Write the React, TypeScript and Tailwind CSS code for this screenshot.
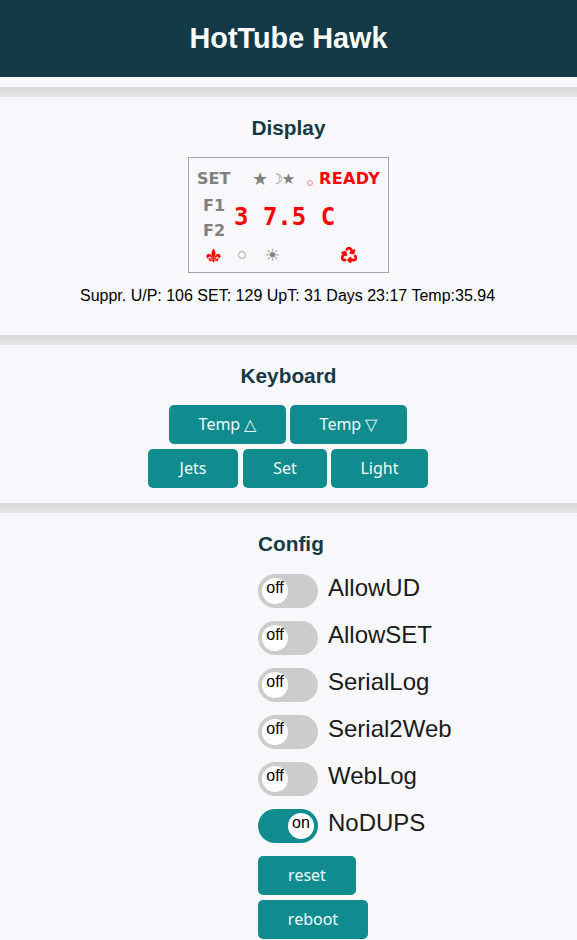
import { FaRecycle } from 'react-icons/fa';
import { GiFleurDeLys } from 'react-icons/gi';

const buttonClass =
  "flex h-[39px] items-center justify-center rounded-[5px] bg-[#108b8e] pb-0.5 text-[16px] text-[#f0fbfb] font-['Noto_Sans',sans-serif]";

const toggles = [
  { label: 'AllowUD', on: false },
  { label: 'AllowSET', on: false },
  { label: 'SerialLog', on: false },
  { label: 'Serial2Web', on: false },
  { label: 'WebLog', on: false },
  { label: 'NoDUPS', on: true },
];

function Divider() {
  return <div className="h-2.5 bg-gradient-to-b from-[#d8d8d8] to-[#e4e4e4]" />;
}

function Toggle({ label, on }: { label: string; on: boolean }) {
  return (
    <div className="flex h-[34px] items-start gap-2.5">
      <div className={`flex h-[34px] w-[60px] items-center rounded-full px-1 ${on ? 'justify-end bg-[#108b8e]' : 'bg-[#cccccc]'}`}>
        <div className="flex h-[26px] w-[26px] justify-center rounded-full bg-white text-[16px] leading-[20px] text-black">
          {on ? 'on' : 'off'}
        </div>
      </div>
      <span className="text-[24px] leading-7 text-[#1a1a1a]">{label}</span>
    </div>
  );
}

function Lcd() {
  return (
    <div className="mx-auto flex h-[116px] w-[201px] flex-col border border-[#a3a3a3] pl-2 pt-[9px] text-left font-['DejaVu_Sans',sans-serif] text-[#808080]">
      <div className="flex h-6 items-center">
        <span className="w-[55px] text-[16px] font-bold leading-6">SET</span>
        <span className="flex w-[55px] items-center whitespace-pre leading-6">
          <span className="text-[18px]">★</span>
          <span className="ml-[2px] text-[14px]">☽</span>
          <span className="ml-[-1px] text-[15px]">★</span>
        </span>
        <span className="mt-2 h-[6px] w-[6px] rounded-full border border-[#f58a8a]" />
        <span className="ml-[6px] text-[16px] font-bold leading-6 tracking-[0.4px] text-[#ff0000]">READY</span>
      </div>
      <div className="flex h-[52px] items-center">
        <div className="ml-[6px] mt-0.5 flex w-[31px] flex-col text-[16px] font-bold leading-[25px]">
          <span>F1</span>
          <span>F2</span>
        </div>
        <span className="whitespace-pre font-['DejaVu_Sans_Mono',monospace] text-[24px] font-bold leading-7 text-[#ff0000]">
          3 7.5 C
        </span>
      </div>
      <div className="flex h-[24px] items-center">
        <GiFleurDeLys className="ml-[9px] h-[15px] w-[15px] stroke-[#ff0000] stroke-[12px] text-[#ff0000]" />
        <span className="ml-[17px] h-[8px] w-[8px] rounded-full border border-[#a8a8a8]" />
        <span className="ml-[19px] w-[76px] text-[17px] leading-6">☀</span>
        <FaRecycle className="h-[16px] w-[16px] stroke-[#ff0000] stroke-[28px] text-[#ff0000]" />
      </div>
    </div>
  );
}

export default function App() {
  return (
    <div className="h-[940px] overflow-hidden bg-[#f8f8fb] font-['Liberation_Sans',Arial,sans-serif]">
      <header className="flex h-[77px] items-center justify-center bg-[#143947] text-[28.8px] font-bold text-white">
        HotTube Hawk
      </header>
      <div className="h-2.5" />
      <Divider />
      <section className="h-[238px] pt-[19px] text-center">
        <h2 className="mb-[17px] text-[20.8px] font-bold leading-6 text-[#143947]">Display</h2>
        <Lcd />
        <p className="mt-[14px] pr-0.5 text-[16px] leading-[18px] text-black">Suppr. U/P: 106 SET: 129 UpT: 31 Days 23:17 Temp:35.94</p>
      </section>
      <Divider />
      <section className="h-[158px] pt-[19px]">
        <h2 className="mb-[17px] text-center text-[20.8px] font-bold leading-6 text-[#143947]">Keyboard</h2>
        <div className="flex gap-1 pl-[169px]">
          <div className={`${buttonClass} w-[117px]`}>Temp △</div>
          <div className={`${buttonClass} w-[117px]`}>Temp ▽</div>
        </div>
        <div className="mt-[5px] flex pl-[148px]">
          <div className={`${buttonClass} w-[90px]`}>Jets</div>
          <div className={`${buttonClass} ml-[5px] w-[84px]`}>Set</div>
          <div className={`${buttonClass} ml-1 w-[97px]`}>Light</div>
        </div>
      </section>
      <Divider />
      <section className="pl-[258px] pt-[19px]">
        <h2 className="mb-[18px] text-[20.8px] font-bold leading-6 text-[#143947]">Config</h2>
        <div className="flex flex-col gap-[13px]">
          {toggles.map((t) => (
            <Toggle key={t.label} label={t.label} on={t.on} />
          ))}
        </div>
        <div className={`${buttonClass} mt-[13px] w-[98px]`}>reset</div>
        <div className={`${buttonClass} mt-[5px] w-[110px]`}>reboot</div>
      </section>
    </div>
  );
}
